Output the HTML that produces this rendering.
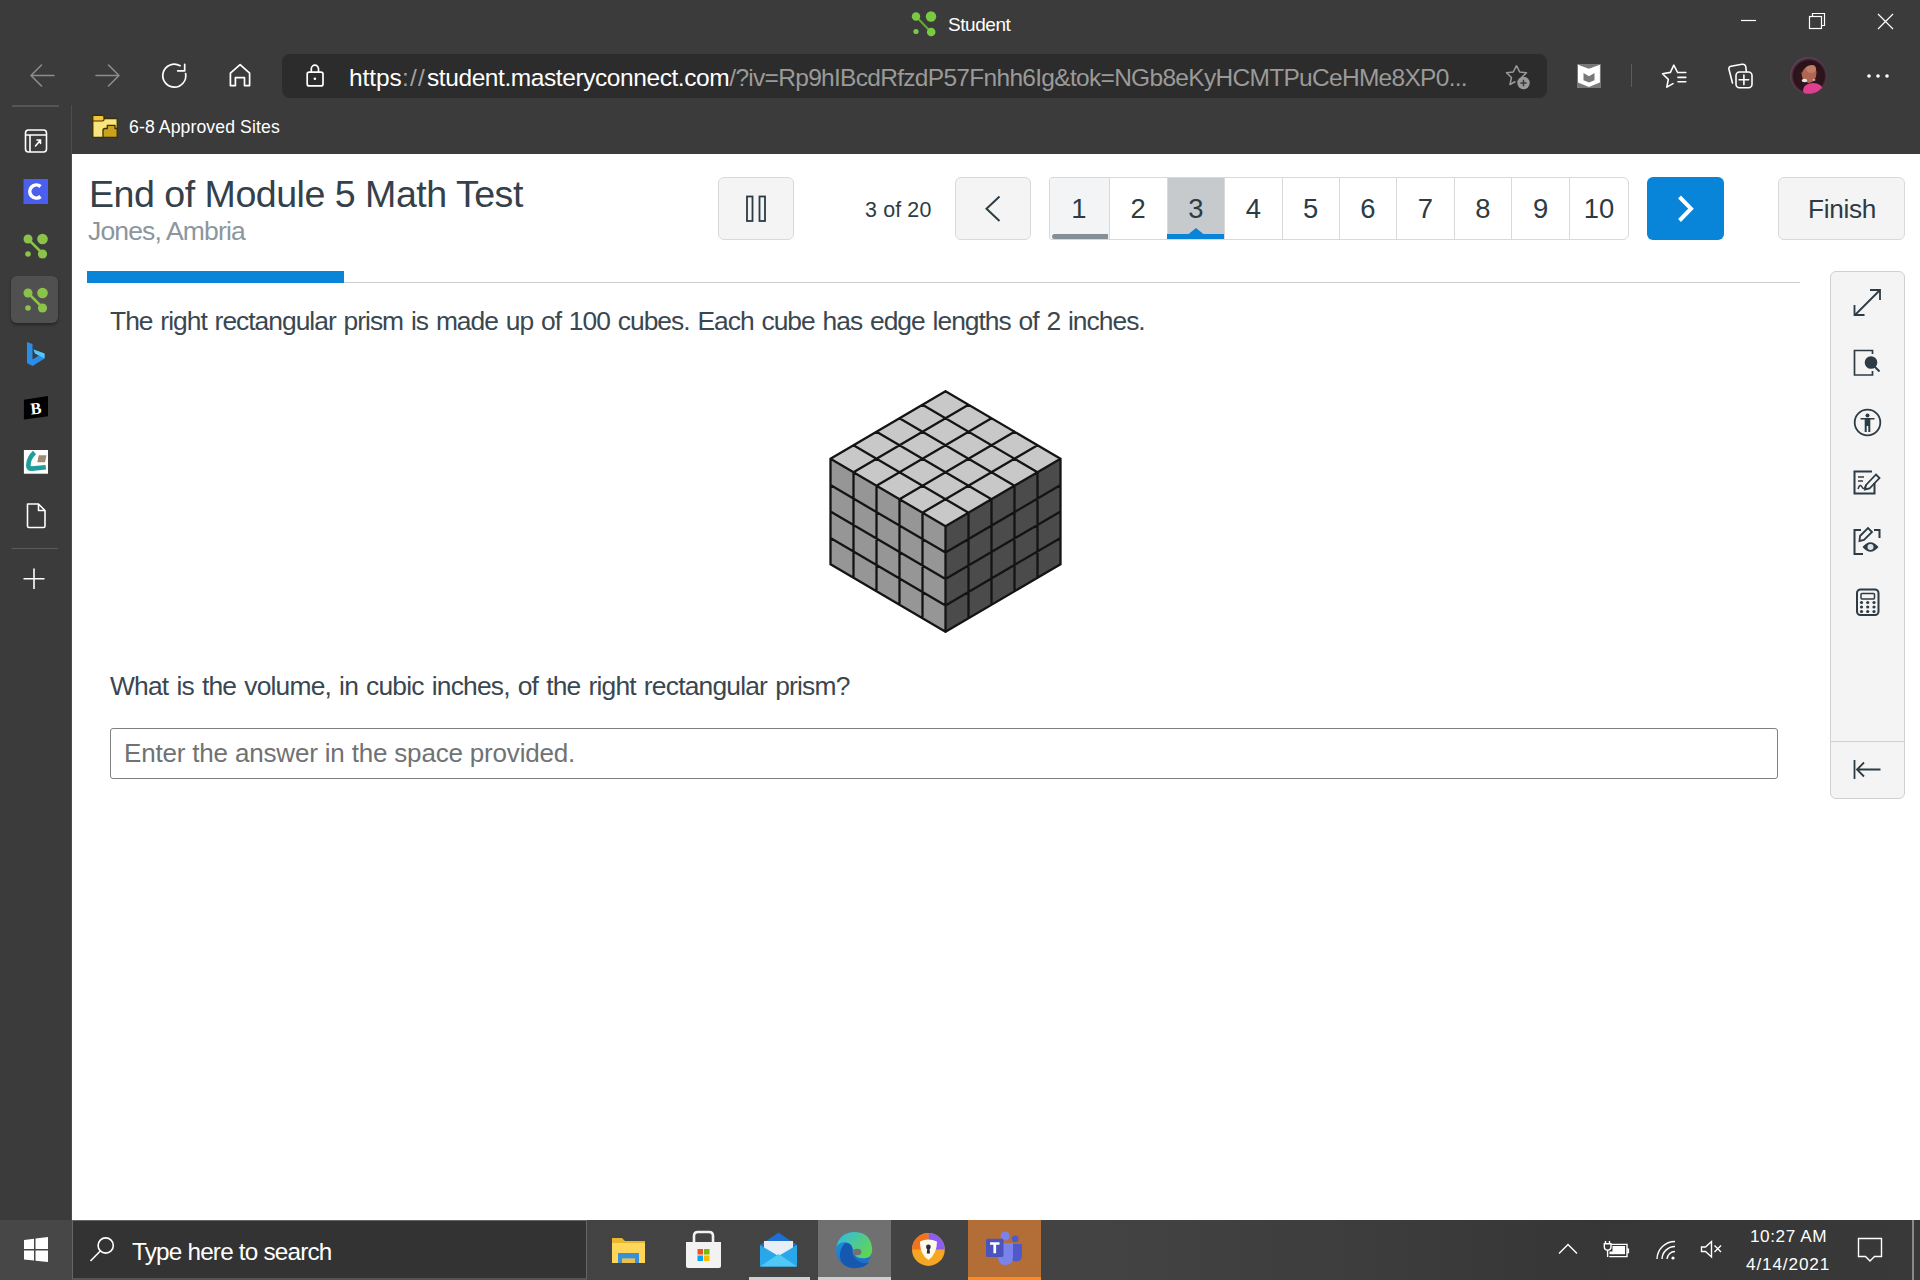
<!DOCTYPE html>
<html><head><meta charset="utf-8">
<style>
*{margin:0;padding:0;box-sizing:border-box}
html,body{width:1920px;height:1280px;overflow:hidden;background:#fff;font-family:"Liberation Sans",sans-serif}
.a{position:absolute}
svg{position:absolute;overflow:visible}
#chrome{left:0;top:0;width:1920px;height:154px;background:#3b3b3b}
#side{left:0;top:154px;width:72px;height:1066px;background:#3b3b3b}
#addr{left:282px;top:54px;width:1265px;height:44px;background:#2c2c2c;border-radius:8px}
#task{left:0;top:1220px;width:1920px;height:60px;background:linear-gradient(90deg,#444 0,#434343 1100px,#3d3d3d 1350px,#363636 1600px,#393939 1920px)}
.t{white-space:nowrap;line-height:1}
.btn{background:#f4f4f4;border:1px solid #d9d9d9;border-radius:6px}
.pg{position:absolute;top:0;height:61px;width:58px;border-left:1px solid #d9d9d9}
.dg{position:absolute;white-space:nowrap;line-height:1;font-size:27.4px;color:#2d3b45;top:17.3px;left:0;width:100%;text-align:center}
</style></head>
<body>
<div id="chrome" class="a"></div>
<div id="side" class="a"></div>
<div id="addr" class="a"></div>
<div id="task" class="a"></div>

<!-- ===== title bar ===== -->
<svg style="left:0;top:0" width="1920" height="50">
  <g fill="#7ac943">
    <line x1="916" y1="16.5" x2="931" y2="32" stroke="#6aa83a" stroke-width="2"/>
    <circle cx="916" cy="16.5" r="4.2"/>
    <circle cx="931" cy="16.5" r="5.2"/>
    <circle cx="916" cy="31.5" r="2.6"/>
    <circle cx="931.2" cy="32" r="4.3"/>
  </g>
  <g stroke="#fff" stroke-width="1.2" fill="none">
    <line x1="1741" y1="20.5" x2="1756" y2="20.5"/>
    <rect x="1809.5" y="16.5" width="12" height="12"/>
    <path d="M1812.5 16.5 V13.5 H1824.5 V25.5 H1821.5"/>
    <path d="M1878 14 L1893 29 M1893 14 L1878 29"/>
  </g>
</svg>
<div class="a t" id="stu" style="left:948px;top:14.5px;font-size:19px;letter-spacing:-0.45px;color:#fff">Student</div>

<!-- ===== toolbar ===== -->
<svg style="left:0;top:50px" width="300" height="50">
  <g stroke="#8c8c8c" stroke-width="1.6" fill="none" stroke-linecap="round" stroke-linejoin="round">
    <path d="M31 25.5 H54 M41.5 15 L31 25.5 L41.5 36"/>
    <path d="M96 25.5 H119 M108.5 15 L119 25.5 L108.5 36"/>
  </g>
  <g stroke="#fff" stroke-width="1.7" fill="none" stroke-linecap="round" stroke-linejoin="round">
    <path d="M180.1 15.7 A11.5 11.5 0 1 0 185.6 23.5"/>
    <path d="M177.7 20.8 H184.7 V14.4"/>
    <path d="M240.1 14.6 L230.4 23.2 V35.6 H235.4 V27.6 H244.5 V35.6 H249.6 V23.2 Z"/>
  </g>
</svg>
<svg style="left:300px;top:54px" width="40" height="44">
  <g stroke="#fff" stroke-width="1.7" fill="none">
    <rect x="7.2" y="18.1" width="15.8" height="13.8" rx="2"/>
    <path d="M11.3 18.1 V14.8 A3.6 3.6 0 0 1 18.5 14.8 V18.1"/>
  </g>
  <circle cx="14.9" cy="24.8" r="1.3" fill="#fff"/>
</svg>
<div class="a t" id="url" style="left:349px;top:65.5px;font-size:24.5px;letter-spacing:-0.49px;color:#fff"><span style="display:inline-block;width:53px;letter-spacing:-0.1px">https</span><span style="display:inline-block;width:25px;color:#a0a0a0;letter-spacing:1.2px">://</span><span style="display:inline-block;width:302.3px;letter-spacing:-0.42px">student.masteryconnect.com</span><span style="color:#9a9a9a;letter-spacing:-0.7px">/?iv=Rp9hIBcdRfzdP57Fnhh6Ig&amp;tok=NGb8eKyHCMTPuCeHMe8XP0...</span></div>
<svg style="left:1500px;top:54px" width="420" height="44">
  <!-- star add -->
  <g stroke="#9a9a9a" stroke-width="1.5" fill="none" stroke-linejoin="round">
    <path d="M16.5 11.5 L19.7 18 L26.5 18.8 L21.5 23.5 L22.5 26 M16.5 11.5 L13.3 18 L6.5 18.8 L11.5 23.5 L10 30.5 L15.5 27.5"/>
  </g>
  <circle cx="23.5" cy="29" r="6.2" fill="#9a9a9a"/>
  <path d="M23.5 25.8 V32.2 M20.3 29 H26.7" stroke="#3b3b3b" stroke-width="1.5"/>
  <!-- mcafee -->
  <rect x="77" y="10" width="24" height="24" fill="#787878"/>
  <path d="M78 10.8 L88.9 14.7 L99.9 10.8 V28.4 L88.9 32.9 L78 28.4 Z" fill="#fff"/>
  <path d="M83.5 19 L89 22.3 L94.5 19 V26.2 L89 28.6 L83.5 26.2 Z" fill="#787878"/>
  <!-- separator -->
  <line x1="131.5" y1="10" x2="131.5" y2="33" stroke="#5c5c5c" stroke-width="1"/>
  <!-- favorites -->
  <g stroke="#fff" stroke-width="1.6" fill="none" stroke-linejoin="round" stroke-linecap="round">
    <path d="M177.6 18.5 L173.8 11.2 L170.4 18.4 L162.5 19.7 L168.3 25.4 L166.8 33.1 L173 29.6"/>
    <path d="M178 18.5 H185.8 M178 23.4 H185.8 M178 27.8 H185.8"/>
  </g>
  <!-- collections -->
  <g stroke="#fff" stroke-width="1.6" fill="none" stroke-linejoin="round" stroke-linecap="round">
    <path d="M232.5 29 L229 15.5 Q228.3 12.8 231 12.2 L242 10.3 Q245 9.8 245.8 12.6 L246.3 17.6"/>
    <rect x="236" y="18" width="16" height="15.8" rx="3.5"/>
    <path d="M243.9 21 V30.6 M239.1 25.8 H248.7"/>
  </g>
  <!-- more -->
  <g fill="#fff">
    <circle cx="369" cy="22" r="1.8"/><circle cx="378" cy="22" r="1.8"/><circle cx="387" cy="22" r="1.8"/>
  </g>
</svg>
<!-- avatar -->
<svg style="left:1790px;top:57px" width="38" height="38">
  <defs><clipPath id="avc"><circle cx="18.5" cy="18.5" r="18.3"/></clipPath>
  <radialGradient id="avg" cx="50%" cy="50%" r="50%"><stop offset="0" stop-color="#3a1a22"/><stop offset="0.8" stop-color="#2b1219"/><stop offset="1" stop-color="#6a4a68"/></radialGradient></defs>
  <g clip-path="url(#avc)">
    <rect width="38" height="38" fill="url(#avg)"/>
    <ellipse cx="19" cy="15.5" rx="7.5" ry="10.5" fill="#b06752"/>
    <ellipse cx="21" cy="12" rx="5" ry="4" fill="#c47e68"/>
    <path d="M9 10 Q14 4 22 5 Q29 6 31 12 Q27 8 22 8 Q15 8 12 16 Z" fill="#2a1218"/>
    <ellipse cx="23" cy="33" rx="10" ry="7" fill="#de3f8e"/>
    <ellipse cx="14.5" cy="23.5" rx="2.8" ry="1.8" fill="#e8e0ea"/>
    <ellipse cx="24" cy="23" rx="1.5" ry="0.8" fill="#f0d0d0"/>
  </g>
</svg>

<!-- ===== favorites bar ===== -->
<svg style="left:88px;top:110px" width="34" height="34">
  <path d="M4.8 5.5 H14.5 L16 8.5 H29.2 V27.3 H4.8 Z" fill="#f9e580" stroke="#3d2e05" stroke-width="1.3" stroke-linejoin="round"/>
  <path d="M4.8 5.5 H14.5 Q16 5.5 16 7.5 V9.5 Q16 11 14.5 11 H4.8 Z" fill="#f2c53c" stroke="#3d2e05" stroke-width="1.2"/>
  <path d="M15 27.3 V20.5 Q15 18.5 17 18.5 H19.3 V15.3 H27 V18.5 H29.2 V27.3 Z" fill="#c9a21e" stroke="#3d2e05" stroke-width="1.3" stroke-linejoin="round"/>
</svg>
<div class="a t" id="fav" style="left:129px;top:118.6px;font-size:17.6px;letter-spacing:0.12px;color:#fff">6-8 Approved Sites</div>

<!-- ===== sidebar ===== -->
<div class="a" style="left:12px;top:105px;width:47px;height:2px;background:#555"></div>
<div class="a" style="left:71px;top:105px;width:1px;height:1115px;background:#4d4d4d"></div>
<div class="a" style="left:11px;top:276px;width:47px;height:47px;border-radius:6px;background:#505050;box-shadow:0 2px 3px rgba(0,0,0,.35)"></div>
<svg style="left:0;top:106px" width="72" height="500">
  <!-- icon1 -->
  <g stroke="#fff" stroke-width="1.6" fill="none">
    <rect x="25.5" y="24" width="21" height="22" rx="3"/>
    <path d="M25.5 29 H46.5 M30 29 V46"/>
    <path d="M35.5 40 L40.5 34 M37 34 H40.5 V37.5" stroke-linecap="round"/>
  </g>
  <!-- C -->
  <rect x="23.5" y="73" width="24.5" height="25" fill="#4a5ff0"/>
  <path d="M40.5 80.5 A6.5 6.5 0 1 0 40.5 90.5" stroke="#fff" stroke-width="3.6" fill="none"/>
  <!-- green logos -->
  <g fill="#8bc34a">
    <line x1="28" y1="133" x2="42" y2="147" stroke="#8bc34a" stroke-width="2.5"/>
    <circle cx="28" cy="133" r="4.5"/><circle cx="42.5" cy="133" r="5.3"/>
    <circle cx="28" cy="148" r="2.8"/><circle cx="42.5" cy="148" r="4.6"/>
    <line x1="28" y1="187" x2="42" y2="201" stroke="#8bc34a" stroke-width="2.5"/>
    <circle cx="28" cy="187" r="4.5"/><circle cx="42.5" cy="187" r="5.3"/>
    <circle cx="28" cy="202" r="2.8"/><circle cx="42.5" cy="202" r="4.6"/>
  </g>
  <!-- bing -->
  <path d="M27 236 L32.5 238 V253.5 L39 249.5 L35 247.5 L33.5 243.5 L44.5 247.5 V252.5 L32.5 260 L27 257 Z" fill="#2a8ee8"/>
  <path d="M33.5 243.5 L44.5 247.5 V252.5 L39 249.5 L35 247.5 Z" fill="#56c8f5"/>
  <!-- B -->
  <path d="M23.9 293.8 L48 290.1 V310.2 L23.9 313.5 Z" fill="#000"/>
  <text x="35.8" y="308" font-family="Liberation Serif" font-weight="bold" font-size="16.5" fill="#fff" text-anchor="middle" transform="rotate(-6 35.8 302)">B</text>
  <!-- L logo -->
  <rect x="23.9" y="344" width="24.1" height="23.7" fill="#fff"/>
  <path d="M34.5 346.5 Q28.5 352 28.3 359.5 Q28.5 362.8 32 362.6 L45.8 361.2" stroke="#1e9e9a" stroke-width="4.6" fill="none" stroke-linejoin="round"/>
  <path d="M38.7 349.3 H46.5 L45 356.2 H37.3 Z" fill="#a08b70"/>
  <!-- file -->
  <path d="M27.5 398 H38.5 L45 404.5 V420 Q45 421.5 43.5 421.5 H29 Q27.5 421.5 27.5 420 Z M38.5 398 V404.5 H45" stroke="#fff" stroke-width="1.6" fill="none" stroke-linejoin="round"/>
  <!-- separator -->
  <line x1="11.5" y1="442.5" x2="58" y2="442.5" stroke="#5a5a5a" stroke-width="1"/>
  <!-- plus -->
  <path d="M34 462.5 V483 M23.5 472.7 H44.5" stroke="#fff" stroke-width="1.6"/>
</svg>

<!-- ===== content ===== -->
<div class="a t" id="title" style="left:89px;top:176px;font-size:37.6px;letter-spacing:-0.5px;color:#34414a">End of Module 5 Math Test</div>
<div class="a t" id="name" style="left:88px;top:217.5px;font-size:26.5px;letter-spacing:-0.85px;color:#8b969e">Jones, Ambria</div>

<div class="a btn" style="left:718px;top:177px;width:76px;height:63px"></div>
<svg style="left:718px;top:177px" width="76" height="63">
  <rect x="29" y="19.5" width="5.5" height="24.5" stroke="#2d3b45" stroke-width="1.8" fill="none"/>
  <rect x="41.5" y="19.5" width="5.5" height="24.5" stroke="#2d3b45" stroke-width="1.8" fill="none"/>
</svg>
<div class="a t" id="of" style="left:865px;top:200px;font-size:21.4px;letter-spacing:0.15px;color:#2d3b45">3 of 20</div>
<div class="a btn" style="left:955px;top:177px;width:76px;height:63px"></div>
<svg style="left:955px;top:177px" width="76" height="63">
  <path d="M44.5 19.5 L31.5 31.7 L44.5 44" stroke="#2d3b45" stroke-width="2" fill="none"/>
</svg>

<div class="a" style="left:1049px;top:177px;width:580px;height:63px;border:1px solid #d9d9d9;border-radius:3px 6px 6px 3px;background:#fff;overflow:hidden">
  <div class="pg" style="left:-1px;width:59.5px;border-left:none;background:#f3f4f5"><div class="dg">1</div><div class="a" style="left:3px;top:56px;width:56px;height:5px;background:#878f96;border-radius:3px 0 0 3px"></div></div>
  <div class="pg" style="left:58.5px;width:58.0px"><div class="dg">2</div></div>
  <div class="pg" style="left:116.5px;width:57.5px;background:#c7cacd"><div class="dg">3</div><div class="a" style="left:-1px;top:56px;width:58.5px;height:5px;background:#0a84d9"></div><svg style="left:20.25px;top:50px" width="16" height="7"><path d="M0 6.5 L8 0 L16 6.5 Z" fill="#0a84d9"/></svg></div>
  <div class="pg" style="left:174px;width:57.5px"><div class="dg">4</div></div>
  <div class="pg" style="left:231.5px;width:57.0px"><div class="dg">5</div></div>
  <div class="pg" style="left:288.5px;width:57.5px"><div class="dg">6</div></div>
  <div class="pg" style="left:346px;width:57.5px"><div class="dg">7</div></div>
  <div class="pg" style="left:403.5px;width:57.5px"><div class="dg">8</div></div>
  <div class="pg" style="left:461px;width:58px"><div class="dg">9</div></div>
  <div class="pg" style="left:519px;width:59px"><div class="dg">10</div></div>
</div>

<div class="a" style="left:1647px;top:177px;width:77px;height:63px;background:#0884d9;border-radius:6px"></div>
<svg style="left:1647px;top:177px" width="77" height="63">
  <path d="M32.5 20 L44 31.7 L32.5 43.5" stroke="#fff" stroke-width="4" fill="none"/>
</svg>
<div class="a btn" style="left:1778px;top:177px;width:127px;height:63px"></div>
<div class="a t" id="fin" style="left:1808px;top:196px;font-size:26.2px;letter-spacing:-0.3px;color:#2d3b45">Finish</div>

<div class="a" style="left:87px;top:282px;width:1713px;height:1px;background:#c7cdd1"></div>
<div class="a" style="left:87px;top:271px;width:257px;height:12px;background:#0884d9"></div>

<!-- tools panel -->
<div class="a" style="left:1830px;top:271px;width:75px;height:528px;background:#f4f4f4;border:1px solid #d0d0d0;border-radius:6px"></div>
<div class="a" style="left:1831px;top:741px;width:73px;height:1px;background:#d0d0d0"></div>
<svg style="left:1830px;top:271px" width="75" height="528">
  <g stroke="#2d3b45" stroke-width="2" fill="none">
    <!-- expand -->
    <path d="M25 44 L50 19 M40 19 H50 V29 M24.5 34 V44 H34.5" stroke-width="1.8"/>
    <!-- doc search -->
    <path d="M42.5 83 V79.5 H24.5 V104 H42.5 V100" stroke-width="1.7"/>
    <!-- accessibility -->
    <circle cx="37.5" cy="151.5" r="12.8" stroke-width="1.8"/>
    <!-- sign -->
    <path d="M42 200.5 H24.5 V222.5 H44.5 V212"/>
    <path d="M28 206 H34 M28 210 H33" stroke-width="1.6"/>
    <path d="M28 218 Q30 212 32 216 Q34 220 36 214" stroke-width="1.5"/>
    <path d="M36 214 L46 203.5 L49.5 207 L39.5 217.5 L35 218.5 Z" stroke-width="1.8"/>
    <!-- edit eye -->
    <path d="M31 259 H24.5 V283 H33"/>
    <path d="M44 259 H49.5 V267"/>
    <path d="M30 265 L38 257 L42 261 L34 269 L29.5 270 Z" stroke-width="1.8"/>
    <!-- calc -->
    <rect x="27" y="318.5" width="21.5" height="25.5" rx="3.5"/>
    <rect x="31" y="322.5" width="13.5" height="5.5" rx="1" stroke-width="1.5"/>
    <!-- collapse -->
    <path d="M24.5 489 V508 M50.5 498.5 H27.5 M34 491.5 L27 498.5 L34 505.5" stroke-width="1.8"/>
  </g>
  <g fill="#2d3b45">
    <circle cx="41" cy="91.5" r="6.3"/>
    <path d="M44 95 L49.5 100.5" stroke="#2d3b45" stroke-width="2"/>
    <circle cx="37.5" cy="144.5" r="2"/>
    <path d="M30.5 147 H44.5 V148.6 H40.3 V161 H38.3 V155 H36.7 V161 H34.7 V148.6 H30.5 Z"/>
    <path d="M32.5 276 Q40.5 266.5 48.5 276 Q40.5 285.5 32.5 276 Z"/>
    <circle cx="31.5" cy="331.5" r="1.6"/><circle cx="37.7" cy="331.5" r="1.6"/><circle cx="44" cy="331.5" r="1.6"/>
    <circle cx="31.5" cy="336" r="1.6"/><circle cx="37.7" cy="336" r="1.6"/><circle cx="44" cy="336" r="1.6"/>
    <circle cx="31.5" cy="340.5" r="1.6"/><circle cx="37.7" cy="340.5" r="1.6"/><circle cx="44" cy="340.5" r="1.6"/>
  </g>
  <circle cx="40.5" cy="276" r="3" fill="#dfe3e6"/>
</svg>

<div class="a t" id="q1" style="left:110px;top:308px;font-size:26.4px;letter-spacing:-0.99px;word-spacing:1.5px;color:#3b4750">The right rectangular prism is made up of 100 cubes. Each cube has edge lengths of 2 inches.</div>

<!-- CUBE -->
<svg style="left:0;top:0" width="1920" height="700">
<path d="M945.50 391.20 L1060.50 458.70 L945.50 526.20 L830.50 458.70 Z" fill="#c8c8c8"/>
<path d="M830.50 458.70 L945.50 526.20 L945.50 631.80 L830.50 564.30 Z" fill="#969696"/>
<path d="M945.50 526.20 L1060.50 458.70 L1060.50 564.30 L945.50 631.80 Z" fill="#4b4b4b"/>
<path d="M945.50 391.20 L830.50 458.70 M945.50 391.20 L1060.50 458.70 M968.50 404.70 L853.50 472.20 M922.50 404.70 L1037.50 472.20 M991.50 418.20 L876.50 485.70 M899.50 418.20 L1014.50 485.70 M1014.50 431.70 L899.50 499.20 M876.50 431.70 L991.50 499.20 M1037.50 445.20 L922.50 512.70 M853.50 445.20 L968.50 512.70 M1060.50 458.70 L945.50 526.20 M830.50 458.70 L945.50 526.20 M830.50 458.70 L830.50 564.30 M853.50 472.20 L853.50 577.80 M876.50 485.70 L876.50 591.30 M899.50 499.20 L899.50 604.80 M922.50 512.70 L922.50 618.30 M945.50 526.20 L945.50 631.80 M830.50 458.70 L945.50 526.20 M830.50 485.10 L945.50 552.60 M830.50 511.50 L945.50 579.00 M830.50 537.90 L945.50 605.40 M830.50 564.30 L945.50 631.80 M1060.50 458.70 L1060.50 564.30 M1037.50 472.20 L1037.50 577.80 M1014.50 485.70 L1014.50 591.30 M991.50 499.20 L991.50 604.80 M968.50 512.70 L968.50 618.30 M945.50 526.20 L945.50 631.80 M1060.50 458.70 L945.50 526.20 M1060.50 485.10 L945.50 552.60 M1060.50 511.50 L945.50 579.00 M1060.50 537.90 L945.50 605.40 M1060.50 564.30 L945.50 631.80" stroke="#141414" stroke-width="2.3" fill="none" stroke-linecap="round" stroke-linejoin="round"/>
</svg>
<!-- /CUBE -->

<div class="a t" id="q2" style="left:110px;top:673px;font-size:26.4px;letter-spacing:-0.8px;word-spacing:1.5px;color:#3b4750">What is the volume, in cubic inches, of the right rectangular prism?</div>
<div class="a" style="left:110px;top:728px;width:1668px;height:51px;border:1.5px solid #7d7f81;border-radius:3px"></div>
<div class="a t" id="ph" style="left:124px;top:740px;font-size:26px;letter-spacing:-0.18px;color:#707274">Enter the answer in the space provided.</div>

<!-- ===== taskbar ===== -->
<div class="a" style="left:0;top:1220px;width:72px;height:60px;background:#474747"></div>
<div class="a" style="left:72px;top:1220px;width:515px;height:60px;background:#333;border:1px solid #666;border-bottom:2px solid #555"></div>
<div class="a" style="left:818px;top:1220px;width:73px;height:60px;background:#707070"></div>
<div class="a" style="left:818px;top:1277px;width:73px;height:3px;background:#cfcfcf"></div>
<div class="a" style="left:749px;top:1277px;width:61px;height:3px;background:#cfcfcf"></div>
<div class="a" style="left:968px;top:1220px;width:73px;height:60px;background:#b36e38"></div>
<div class="a" style="left:968px;top:1277px;width:73px;height:3px;background:#ff8a1c"></div>
<div class="a" style="left:1912px;top:1220px;width:2px;height:60px;background:#8a8a8a"></div>
<svg style="left:0;top:1220px" width="1920" height="60">
  <!-- windows logo -->
  <g fill="#fff">
    <path d="M24 20 L34 18.8 V29 H24 Z"/>
    <path d="M35.5 18.6 L48 17 V29 H35.5 Z"/>
    <path d="M24 30.5 H34 V40.6 L24 39.6 Z"/>
    <path d="M35.5 30.5 H48 V42 L35.5 40.8 Z"/>
  </g>
  <!-- search -->
  <g stroke="#fff" stroke-width="1.6" fill="none">
    <circle cx="105.7" cy="25.5" r="7.6"/>
    <path d="M100.3 31 L90.5 41"/>
  </g>
  <!-- file explorer -->
  <path d="M612 18 H622 L625 21 H645 V43 H612 Z" fill="#e8b730"/>
  <path d="M612 23 H645 V43 H612 Z" fill="#ffd659"/>
  <path d="M618 33 H639 V43 H635 V38.5 H622 V43 H618 Z" fill="#3a8fd8"/>
  <rect x="622" y="39" width="13" height="4" fill="#e8c04a"/>
  <!-- store -->
  <path d="M686 22 H721 V46 Q721 48 719 48 H688 Q686 48 686 46 Z" fill="#f2f2f2"/>
  <path d="M694 22 V16 Q694 12 698 12 H709 Q713 12 713 16 V22" stroke="#f2f2f2" stroke-width="2.6" fill="none"/>
  <rect x="697.5" y="29" width="5.5" height="5.5" fill="#f25022"/>
  <rect x="704" y="29" width="5.5" height="5.5" fill="#7fba00"/>
  <rect x="697.5" y="35.5" width="5.5" height="5.5" fill="#00a4ef"/>
  <rect x="704" y="35.5" width="5.5" height="5.5" fill="#ffb900"/>
  <!-- mail -->
  <path d="M760 25 L778.5 12.5 L797 25 V46 H760 Z" fill="#1e6fd1"/>
  <path d="M764 21 H793 V32 L778.5 40 L764 32 Z" fill="#e8eef5"/>
  <path d="M760 25 L778.5 36 L797 25 V46.5 H760 Z" fill="#28a8ea"/>
  <path d="M760 46.5 L778.5 34 L797 46.5 Z" fill="#50c8f5"/>
  <!-- edge -->
  <defs>
    <linearGradient id="eg1" x1="0" y1="0" x2="1" y2="0.6"><stop offset="0" stop-color="#35b8e8"/><stop offset="1" stop-color="#5ed45a"/></linearGradient>
    <linearGradient id="eg2" x1="0" y1="0" x2="0.3" y2="1"><stop offset="0" stop-color="#1f9ae0"/><stop offset="1" stop-color="#1b6fc8"/></linearGradient>
  </defs>
  <circle cx="854" cy="30" r="18" fill="url(#eg2)"/>
  <path d="M836.5 27 Q839 12.5 855 12 Q871.5 12.5 872.2 30 Q872 37 866 38 Q858 39 855 35 Q853 31 852.5 28 Q851 22 844 22 Q838 23 836.5 27 Z" fill="url(#eg1)"/>
  <path d="M845 23 Q853 23 852.5 31 Q853 39 861 42.5 Q866 44 869.5 42 Q864 48.5 854 48.2 Q842 47.5 840 38 Q839 30 845 23 Z" fill="#1657b0"/>
  <ellipse cx="857" cy="32" rx="4.5" ry="3.3" fill="#727272"/>
  <!-- secure browser -->
  <circle cx="928.4" cy="29.5" r="16.4" fill="#f5a623"/>
  <path d="M928.4 13.1 A16.4 16.4 0 0 1 944.8 29.5 L928.4 29.5 Z" fill="#8a5ef0"/>
  <path d="M912 29.5 A16.4 16.4 0 0 1 928.4 13.1 L928.4 29.5 Z" fill="#f2731f"/>
  <path d="M920 21.5 Q928 17.5 937 21.5 Q937 34 928.4 40 Q919.5 34 920 21.5 Z" fill="#fffbe8"/>
  <circle cx="928.4" cy="27" r="2.4" fill="#2c2c44"/>
  <path d="M927.3 28 H929.5 L930 33.5 H926.8 Z" fill="#2c2c44"/>
  <!-- teams -->
  <circle cx="1015.2" cy="18.8" r="3.4" fill="#5059c9"/>
  <path d="M1010 24 H1022 V35 Q1022 41.5 1016 41.5 Q1010 41.5 1010 35 Z" fill="#5059c9"/>
  <circle cx="1005.2" cy="16" r="4.6" fill="#7b83eb"/>
  <path d="M998 23 H1013 V37 Q1013 45 1005.5 45 Q998 45 998 37 Z" fill="#7b83eb"/>
  <rect x="986" y="18.8" width="17.5" height="18.2" rx="1.5" fill="#4b53bc"/>
  <path d="M990 22.3 H999.5 V24.8 H996.1 V33.3 H993.4 V24.8 H990 Z" fill="#fff"/>
  <!-- tray -->
  <g stroke="#fff" stroke-width="1.4" fill="none">
    <path d="M1559 33.5 L1568 24.5 L1577 33.5"/>
    <path d="M1611.3 24.4 H1627 V36.6 H1609.3"/>
    <path d="M1627 29.2 H1628.4 V32.5 H1627"/>
    <path d="M1605.5 20.9 V23.8 M1609.5 20.9 V23.8"/>
    <path d="M1604.3 23.8 H1611 V26.6 Q1611 30.2 1607.6 30.2 Q1604.3 30.2 1604.3 26.6 Z"/>
    <path d="M1607.6 30.2 V37"/>
    <path d="M1657 39 A18 18 0 0 1 1675 21.5 M1662 39 A13 13 0 0 1 1675 26.5 M1667 39 A8 8 0 0 1 1675 31.5"/>
    <path d="M1701.5 27 H1705.5 L1711.5 21.5 V37 L1705.5 31.5 H1701.5 Z"/>
    <path d="M1714.5 25.5 L1721 32 M1721 25.5 L1714.5 32"/>
    <path d="M1858.5 18.5 H1881.5 V36.5 H1874.5 L1870 41 L1865.5 36.5 H1858.5 Z"/>
  </g>
  <rect x="1612.5" y="26" width="12.5" height="8.2" fill="#fff"/><rect x="1609.5" y="31.5" width="3.5" height="2.7" fill="#fff"/>
  <circle cx="1673" cy="38" r="1.6" fill="#fff"/>
</svg>
<div class="a t" id="srch" style="left:132px;top:1240px;font-size:24.3px;letter-spacing:-0.8px;color:#fff">Type here to search</div>
<div class="a t" id="tm" style="left:1750px;top:1228px;font-size:17.2px;letter-spacing:0.55px;color:#fff">10:27 AM</div>
<div class="a t" id="dt" style="left:1746px;top:1255.5px;font-size:17.2px;letter-spacing:0.85px;color:#fff">4/14/2021</div>



</body></html>
